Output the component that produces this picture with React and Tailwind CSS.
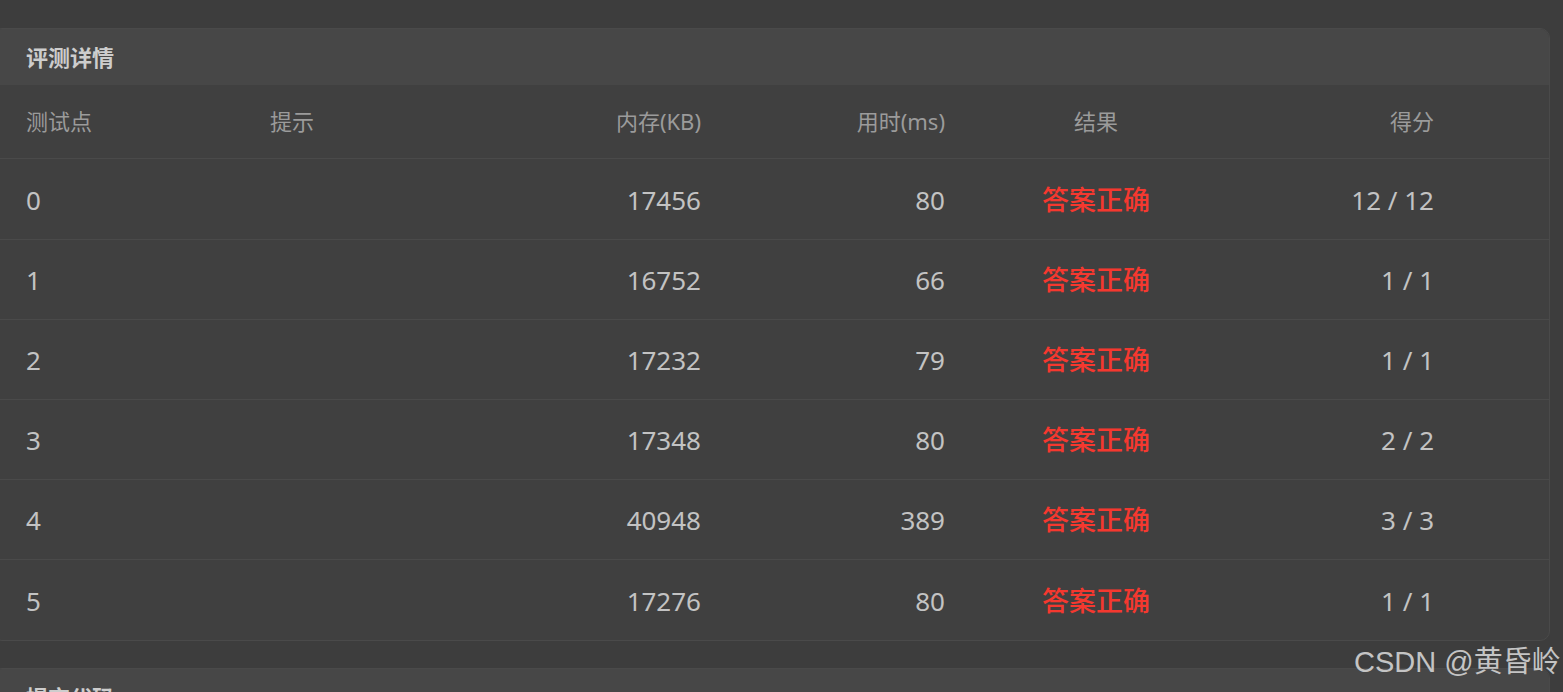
import React from "react";

const rows = [
  ["0", "17456", "80", "12 / 12"],
  ["1", "16752", "66", "1 / 1"],
  ["2", "17232", "79", "1 / 1"],
  ["3", "17348", "80", "2 / 2"],
  ["4", "40948", "389", "3 / 3"],
  ["5", "17276", "80", "1 / 1"],
];

const grid = "grid grid-cols-[244px_200px_231px_244px_302px_187px] items-center pl-[33px]";

export default function App() {
  return (
    <div
      className="relative min-h-screen bg-[#3d3d3d] pt-[28px] pb-[40px] overflow-hidden"
      style={{ fontFamily: '"Noto Sans", "Noto Sans CJK SC", sans-serif' }}
    >
      <div className="ml-[-8px] w-[1558px] rounded-[10px] border border-[#4a4a4a] bg-[#404040] overflow-hidden">
        <div className="h-[56px] bg-[#474747] flex items-center pl-[33px] text-[22px] font-bold text-[#cdcdcd]">
          评测详情
        </div>
        <div className={`${grid} h-[73px] text-[22px] text-[#9b9b9b]`}>
          <div>测试点</div>
          <div>提示</div>
          <div className="text-right">内存(KB)</div>
          <div className="text-right">用时(ms)</div>
          <div className="text-center">结果</div>
          <div className="text-right">得分</div>
        </div>
        {rows.map((r, i) => (
          <div
            key={i}
            className={`${grid} ${i === 0 || i === 5 ? "h-[81px]" : "h-[80px]"} border-t border-[#4a4a4a] text-[26px] text-[#c3c3c3] pt-[2px]`}
          >
            <div>{r[0]}</div>
            <div></div>
            <div className="text-right">{r[1]}</div>
            <div className="text-right">{r[2]}</div>
            <div className="text-center text-[27px] text-[#f5382f] font-medium">答案正确</div>
            <div className="text-right">{r[3]}</div>
          </div>
        ))}
      </div>

      <div className="mt-[27px] ml-[-8px] w-[1558px] rounded-[10px] border border-[#4a4a4a] bg-[#404040] overflow-hidden">
        <div className="h-[56px] bg-[#474747] flex items-center pl-[33px] text-[22px] font-bold text-[#cdcdcd]">
          提交代码
        </div>
        <div className="h-[200px]"></div>
      </div>

      <div
        className="absolute left-[1354px] top-[642px] text-[29px] leading-[40px] text-[#c4c4c4] whitespace-nowrap"
        style={{ fontFamily: '"Liberation Sans", "Noto Sans CJK SC", sans-serif' }}
      >
        CSDN @黄昏岭
      </div>
    </div>
  );
}
